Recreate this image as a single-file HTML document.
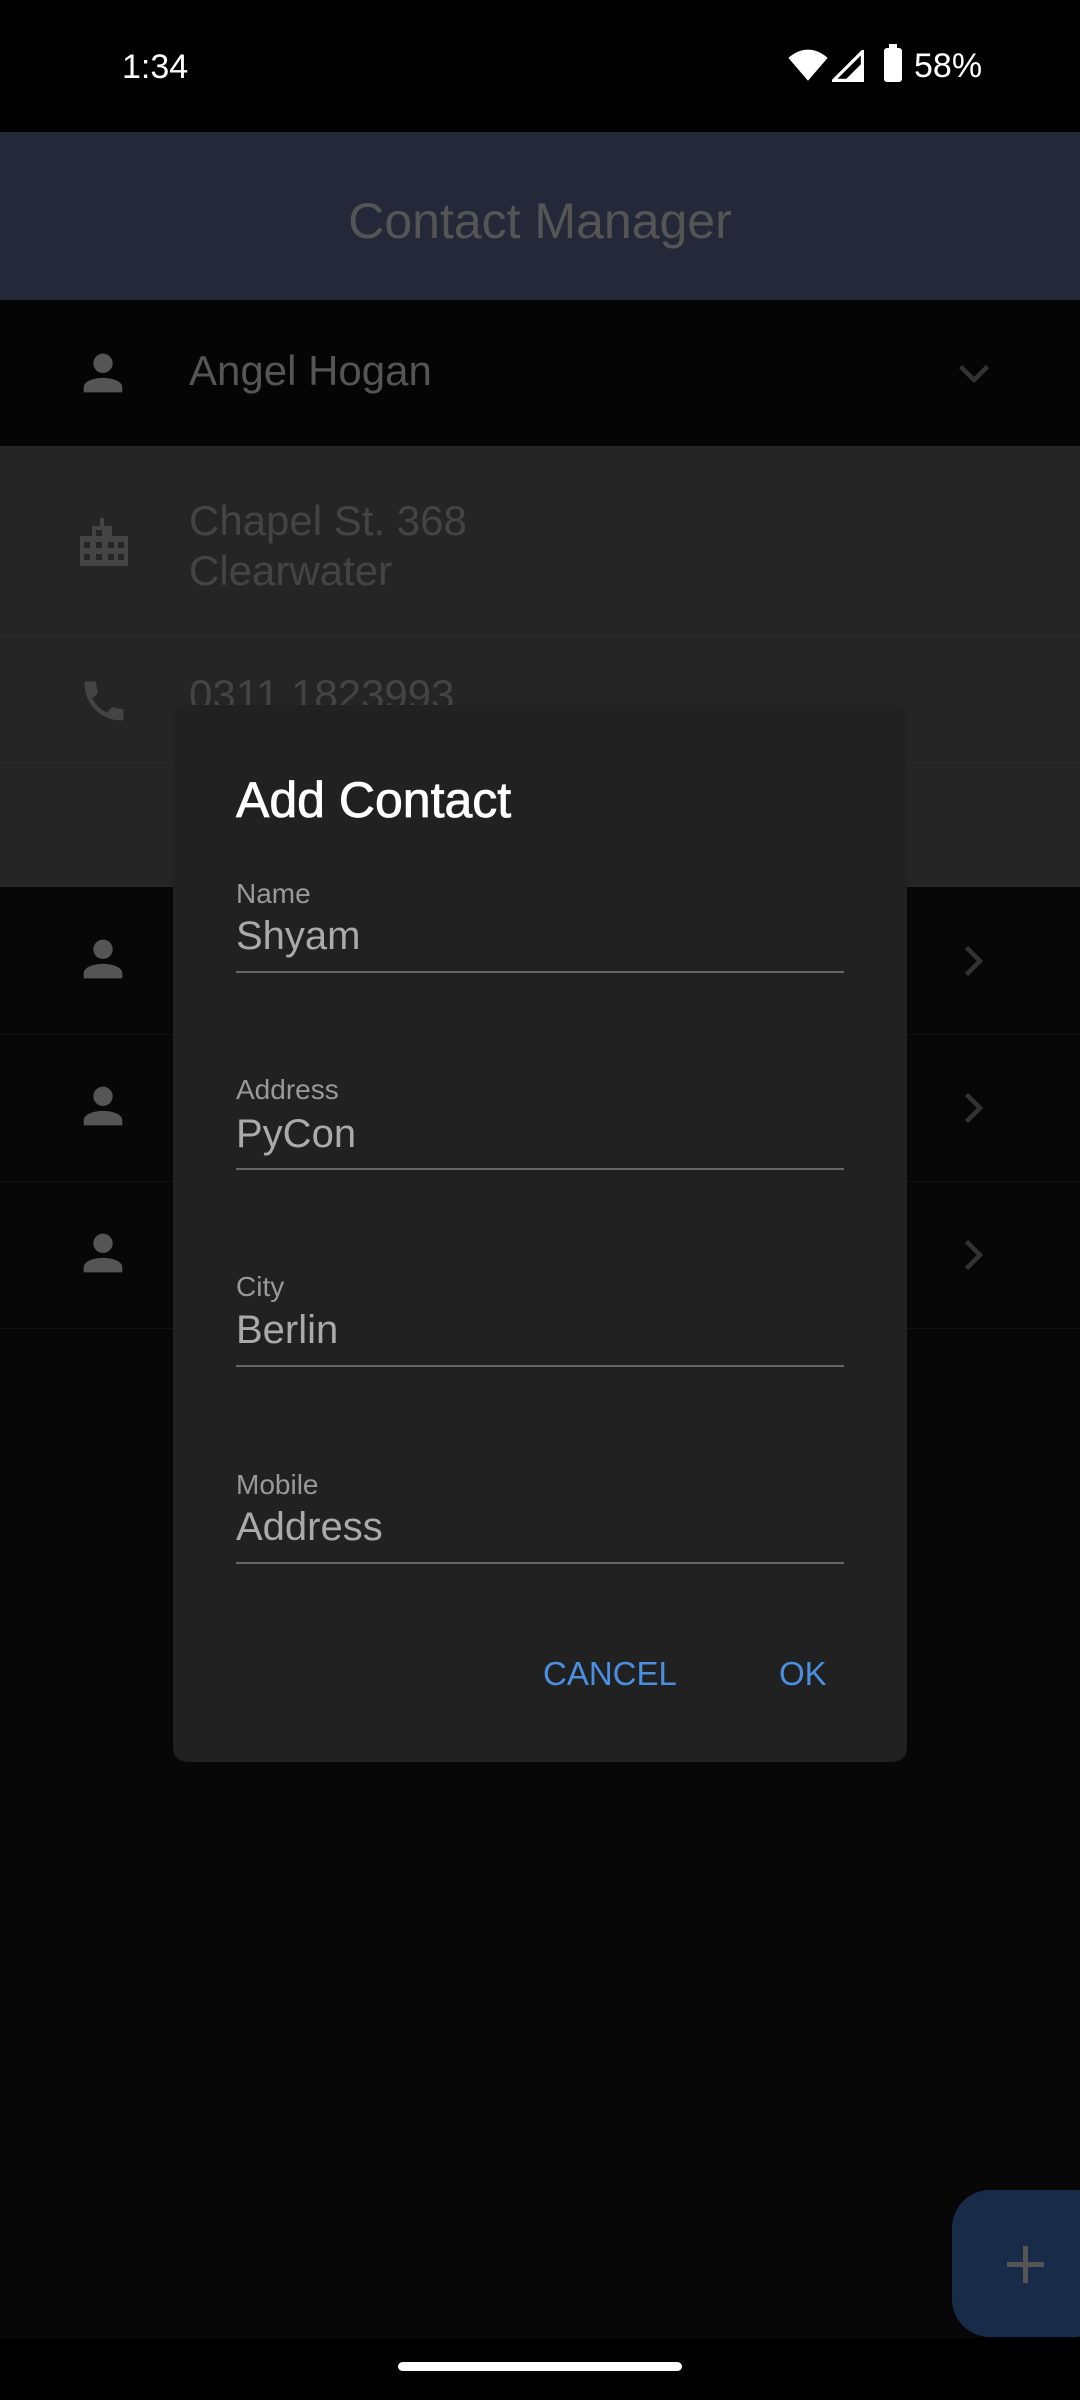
<!DOCTYPE html>
<html><head><meta charset="utf-8"><style>
*{margin:0;padding:0;box-sizing:border-box}
body{width:1080px;height:2400px;background:#070707;position:relative;overflow:hidden;font-family:"Liberation Sans",sans-serif}
.a{position:absolute}
.t{position:absolute;white-space:nowrap;line-height:1}
</style></head><body>
<div class="a" style="left:0;top:0;width:1080px;height:132px;background:#000"></div>
<div class="t" style="left:122px;top:50px;font-size:34px;color:#fff">1:34</div>
<svg class="a" style="left:788px;top:48px" width="40" height="36" viewBox="0 0 24 22"><path d="M12 20L0 6Q12-4 24 6Z" fill="#fff"/></svg>
<svg class="a" style="left:832px;top:50px" width="32" height="32" viewBox="0 0 20 20"><path d="M19 1V19H1Z" fill="none" stroke="#fff" stroke-width="2"/><path d="M19 8V19H8Z" fill="#fff"/></svg>
<div class="a" style="left:884px;top:48px;width:18px;height:34px;background:#fff;border-radius:3px"></div>
<div class="a" style="left:889px;top:44px;width:8px;height:5px;background:#fff"></div>
<div class="t" style="left:914px;top:49px;font-size:34px;color:#fff">58%</div>

<div class="a" style="left:0;top:132px;width:1080px;height:168px;background:#252839"></div>
<div class="t" style="left:0;width:1080px;text-align:center;top:196px;font-size:50px;color:#555">Contact Manager</div>

<div class="a" style="left:0;top:300px;width:1080px;height:146px;background:#050505"></div>
<svg class="a" style="left:74px;top:344px" width="58" height="58" viewBox="0 0 24 24"><circle cx="12" cy="8" r="4" fill="#555"/><path d="M4 20v-2c0-3 5-4 8-4s8 1 8 4v2z" fill="#555"/></svg>
<div class="t" style="left:189px;top:350px;font-size:42px;color:#555">Angel Hogan</div>
<svg class="a" style="left:956px;top:360px" width="36" height="28" viewBox="0 0 24 16"><path d="M3 3l9 9 9-9" fill="none" stroke="#333" stroke-width="3"/></svg>

<div class="a" style="left:0;top:446px;width:1080px;height:441px;background:#252525"></div>
<div class="a" style="left:0;top:635px;width:1080px;height:1px;background:#2c2c2c"></div>
<div class="a" style="left:0;top:762px;width:1080px;height:1px;background:#2c2c2c"></div>
<svg class="a" style="left:80px;top:518px" width="48" height="48" viewBox="0 0 24 24"><path d="M0 24V9h6V4h4V0h2v4h4v5h8v15z" fill="#444"/><g fill="#252525"><rect x="2" y="12" width="3" height="3"/><rect x="2" y="18" width="3" height="3"/><rect x="8" y="6" width="3" height="3"/><rect x="8" y="12" width="3" height="3"/><rect x="8" y="18" width="3" height="3"/><rect x="14" y="12" width="3" height="3"/><rect x="14" y="18" width="3" height="3"/><rect x="19" y="12" width="3" height="3"/><rect x="19" y="18" width="3" height="3"/></g></svg>
<div class="t" style="left:189px;top:500px;font-size:42px;color:#444">Chapel St. 368</div>
<div class="t" style="left:189px;top:550px;font-size:42px;color:#444">Clearwater</div>
<svg class="a" style="left:78px;top:675px" width="52" height="52" viewBox="0 0 24 24"><path d="M6.6 10.8c1.4 2.8 3.8 5.1 6.6 6.6l2.2-2.2c.3-.3.7-.4 1-.2 1.1.4 2.3.6 3.6.6.6 0 1 .4 1 1V20c0 .6-.4 1-1 1C10.6 21 3 13.4 3 4c0-.6.4-1 1-1h3.5c.6 0 1 .4 1 1 0 1.3.2 2.5.6 3.6.1.3 0 .7-.2 1z" fill="#444"/></svg>
<div class="t" style="left:189px;top:674px;font-size:42px;color:#444">0311 1823993</div>

<div class="a" style="left:0;top:1034px;width:1080px;height:1px;background:#121212"></div>
<div class="a" style="left:0;top:1181px;width:1080px;height:1px;background:#121212"></div>
<div class="a" style="left:0;top:1328px;width:1080px;height:1px;background:#121212"></div>
<svg class="a" style="left:74px;top:930px" width="58" height="58" viewBox="0 0 24 24"><circle cx="12" cy="8" r="4" fill="#555"/><path d="M4 20v-2c0-3 5-4 8-4s8 1 8 4v2z" fill="#555"/></svg>
<svg class="a" style="left:74px;top:1077px" width="58" height="58" viewBox="0 0 24 24"><circle cx="12" cy="8" r="4" fill="#555"/><path d="M4 20v-2c0-3 5-4 8-4s8 1 8 4v2z" fill="#555"/></svg>
<svg class="a" style="left:74px;top:1224px" width="58" height="58" viewBox="0 0 24 24"><circle cx="12" cy="8" r="4" fill="#555"/><path d="M4 20v-2c0-3 5-4 8-4s8 1 8 4v2z" fill="#555"/></svg>
<svg class="a" style="left:960px;top:943px" width="28" height="36" viewBox="0 0 16 24"><path d="M3 3l9 9-9 9" fill="none" stroke="#333" stroke-width="3"/></svg>
<svg class="a" style="left:960px;top:1090px" width="28" height="36" viewBox="0 0 16 24"><path d="M3 3l9 9-9 9" fill="none" stroke="#333" stroke-width="3"/></svg>
<svg class="a" style="left:960px;top:1237px" width="28" height="36" viewBox="0 0 16 24"><path d="M3 3l9 9-9 9" fill="none" stroke="#333" stroke-width="3"/></svg>

<div class="a" style="left:173px;top:705px;width:734px;height:1057px;background:#212121;border-radius:14px"></div>
<div class="t" style="left:236px;top:775px;font-size:50px;color:#fff;-webkit-text-stroke:0.8px #fff">Add Contact</div>

<div class="t" style="left:236px;top:880px;font-size:28px;color:#999">Name</div>
<div class="t" style="left:236px;top:916px;font-size:40px;color:#aaa">Shyam</div>
<div class="a" style="left:236px;top:971px;width:608px;height:2px;background:#666"></div>
<div class="t" style="left:236px;top:1076px;font-size:28px;color:#999">Address</div>
<div class="t" style="left:236px;top:1114px;font-size:40px;color:#aaa">PyCon</div>
<div class="a" style="left:236px;top:1168px;width:608px;height:2px;background:#666"></div>
<div class="t" style="left:236px;top:1273px;font-size:28px;color:#999">City</div>
<div class="t" style="left:236px;top:1310px;font-size:40px;color:#aaa">Berlin</div>
<div class="a" style="left:236px;top:1365px;width:608px;height:2px;background:#666"></div>
<div class="t" style="left:236px;top:1471px;font-size:28px;color:#999">Mobile</div>
<div class="t" style="left:236px;top:1507px;font-size:40px;color:#aaa">Address</div>
<div class="a" style="left:236px;top:1562px;width:608px;height:2px;background:#666"></div>

<div class="t" style="left:543px;top:1657px;font-size:33px;color:#4a8fe0">CANCEL</div>
<div class="t" style="left:779px;top:1657px;font-size:33px;color:#4a8fe0">OK</div>

<div class="a" style="left:0;top:2338px;width:1080px;height:62px;background:#000"></div>
<div class="a" style="left:952px;top:2190px;width:160px;height:147px;background:#182b48;border-radius:38px"></div>
<div class="a" style="left:1007px;top:2262px;width:37px;height:5px;background:#555"></div>
<div class="a" style="left:1023px;top:2246px;width:5px;height:37px;background:#555"></div>
<div class="a" style="left:398px;top:2362px;width:284px;height:9px;background:#fff;border-radius:5px"></div>
</body></html>
